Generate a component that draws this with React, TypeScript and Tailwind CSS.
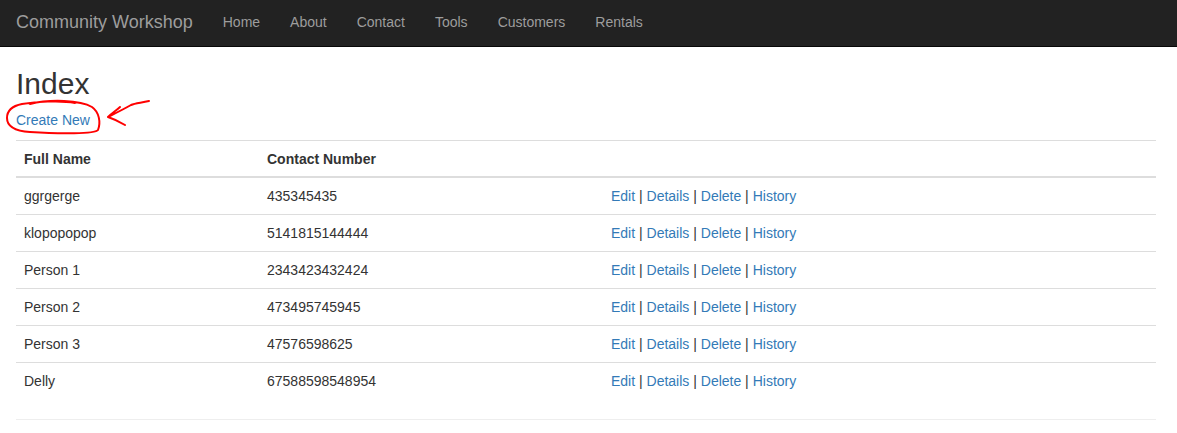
const people = [
  { name: 'ggrgerge', phone: '435345435' },
  { name: 'klopopopop', phone: '5141815144444' },
  { name: 'Person 1', phone: '2343423432424' },
  { name: 'Person 2', phone: '473495745945' },
  { name: 'Person 3', phone: '47576598625' },
  { name: 'Delly', phone: '67588598548954' },
];

const navLinks = ['Home', 'About', 'Contact', 'Tools', 'Customers', 'Rentals'];

function Scribble() {
  // red pen marks drawn over the "Create New" link
  return (
    <svg className="absolute left-0 top-[95px] pointer-events-none" width="160" height="45" viewBox="0 95 160 45">
      <path
        d="M30 104 C 50 99, 80 100, 92 107 C 99 112, 101 122, 98 130 C 95 134, 60 134, 30 132 C 14 131, 7 126, 7 118 C 7 110, 12 106, 22 104 C 35 102, 60 100, 75 103"
        fill="none"
        stroke="#ff0000"
        strokeWidth="2"
        strokeLinecap="round"
      />
      <path
        d="M149 101 C 140 103, 135 103, 131 105 C 124 109, 116 113, 108 117 M108 117 C 112 113, 117 110, 120 107 M108 117 C 114 119, 120 122, 125 125"
        fill="none"
        stroke="#ff0000"
        strokeWidth="2"
        strokeLinecap="round"
      />
    </svg>
  );
}

export default function App() {
  return (
    <div className="min-h-screen bg-white font-['Liberation_Sans',Arial,sans-serif] text-[14px] text-[#333] relative">
      <div className="h-[47px] bg-[#222] border-b border-[#080808] flex items-center pb-[2px]">
        <div className="pl-[16px] pr-[15px] text-[18px] text-[#9d9d9d]">Community Workshop</div>
        <div className="flex">
          {navLinks.map((l) => (
            <a key={l} className="px-[15px] text-[#9d9d9d]">{l}</a>
          ))}
        </div>
      </div>

      <div className="px-[16px] w-[1172px]">
        <h2 className="text-[30px] leading-[33px] mt-[20px] mb-[10px] font-normal">Index</h2>
        <p className="mb-[10px] leading-[20px]">
          <a className="text-[#337ab7]">Create New</a>
        </p>
        <table className="w-[1140px] border-collapse mb-[20px]">
          <thead>
            <tr className="border-t border-[#ddd] border-b-2 border-b-[#ddd]">
              <th className="text-left font-bold px-[8px] pt-[8px] pb-[7px] leading-[20px] w-[243px]">Full Name</th>
              <th className="text-left font-bold px-[8px] pt-[8px] pb-[7px] leading-[20px] w-[344px]">Contact Number</th>
              <th className="px-[8px] pt-[8px] pb-[7px]"></th>
            </tr>
          </thead>
          <tbody>
            {people.map((p) => (
              <tr key={p.name} className="border-t border-[#ddd]">
                <td className="px-[8px] py-[8px] leading-[20px]">{p.name}</td>
                <td className="px-[8px] py-[8px] leading-[20px]">{p.phone}</td>
                <td className="px-[8px] py-[8px] leading-[20px]">
                  <a className="text-[#337ab7]">Edit</a> | <a className="text-[#337ab7]">Details</a> |{' '}
                  <a className="text-[#337ab7]">Delete</a> | <a className="text-[#337ab7]">History</a>
                </td>
              </tr>
            ))}
          </tbody>
        </table>
        <hr className="w-[1140px] border-t border-[#eee]" />
      </div>

      <Scribble />
    </div>
  );
}
